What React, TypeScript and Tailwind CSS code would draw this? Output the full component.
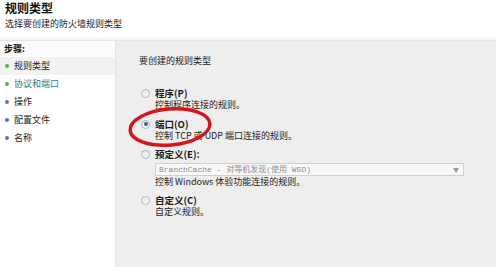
import React from "react";

const steps = [
  { label: "规则类型", done: true, active: true },
  { label: "协议和端口", done: true, link: true },
  { label: "操作" },
  { label: "配置文件" },
  { label: "名称" },
];

function Radio({ checked }: { checked?: boolean }) {
  return (
    <span className="w-[9px] h-[9px] shrink-0 rounded-full border border-[#b4b4b4] bg-gradient-to-br from-[#e6e6e6] to-[#fafafa] flex items-center justify-center">
      {checked && <span className="w-[4px] h-[4px] rounded-full bg-[#3f5f9a]" />}
    </span>
  );
}

function Option({
  label,
  desc,
  checked,
  children,
}: {
  label: string;
  desc: string;
  checked?: boolean;
  children?: React.ReactNode;
}) {
  return (
    <div className="flex flex-col">
      <div className="flex items-center h-[12px] ml-[2px] gap-[5px]">
        <Radio checked={checked} />
        <span className="text-[9.5px] font-bold text-[#1a1a1a] leading-[12px]">{label}</span>
      </div>
      {children}
      <div className="pl-[16px] text-[9px] leading-[12px] text-[#222]">{desc}</div>
    </div>
  );
}

export default function App() {
  return (
    <div
      className="relative w-[496px] h-[267px] bg-white overflow-hidden flex flex-col"
      style={{ fontFamily: '"Noto Sans CJK SC", "Noto Sans", sans-serif' }}
    >
      {/* Header */}
      <div className="h-[37px] shrink-0 pl-[5px] pt-[1px] bg-white">
        <div className="text-[12px] font-bold leading-[14px] text-[#111]">规则类型</div>
        <div className="mt-[3px] text-[9px] leading-[11px] text-[#222]">选择要创建的防火墙规则类型</div>
      </div>
      <div className="h-[3px] shrink-0 bg-[#f7f7f7]" />
      <div className="h-[1px] shrink-0 bg-[#e6e6e6]" />

      <div className="flex flex-1 min-h-0">
        {/* Steps */}
        <div className="w-[116px] shrink-0 bg-white border-r border-[#e2e2e2] flex flex-col">
          <div className="h-[15px] mx-[2px] bg-[#fbfbfb] flex items-center pl-[2px] text-[9px] font-bold text-[#111]">
            步骤:
          </div>
          <div className="mt-[1px] flex flex-col">
            {steps.map((s) => (
              <div
                key={s.label}
                className={`h-[18px] flex items-center gap-[5px] pl-[5px] ${s.active ? "bg-[#f2f2f2]" : ""}`}
              >
                <span
                  className={`w-[4px] h-[4px] rounded-full ${s.done ? "bg-[#5fae4a]" : "bg-[#6a6ab8]"}`}
                />
                <span className={`text-[9px] leading-[12px] ${s.link ? "text-[#2a7a8c]" : "text-[#222]"}`}>
                  {s.label}
                </span>
              </div>
            ))}
          </div>
        </div>

        {/* Content */}
        <div className="flex-1 bg-[#eeeeee] pt-[14px] pl-[23px] pr-[32px] flex flex-col">
          <div className="text-[9px] leading-[12px] text-[#222]">要创建的规则类型</div>
          <div className="mt-[20px] flex flex-col gap-[6px]">
            <div className="mb-[1px]">
              <Option label="程序(P)" desc="控制程序连接的规则。" />
            </div>
            <Option label="端口(O)" desc="控制 TCP 或 UDP 端口连接的规则。" checked />
            <Option label="预定义(E):" desc="控制 Windows 体验功能连接的规则。">
              <div className="ml-[16px] mt-[3px] h-[13px] border border-[#cfcfcf] bg-[#f8f8f8] flex items-center justify-between pl-[3px] pr-[4px]">
                <span
                  className="text-[8px] leading-[10px] text-[#8c8c8c]"
                  style={{ fontFamily: '"Liberation Mono", "Noto Sans CJK SC", monospace' }}
                >
                  BranchCache - 对等机发现(使用 WSD)
                </span>
                <span className="text-[6px] text-[#9a9a9a]">▼</span>
              </div>
            </Option>
            <Option label="自定义(C)" desc="自定义规则。" />
          </div>
        </div>
      </div>

      {/* Red annotation ring */}
      <svg className="absolute left-[124px] top-[103px]" width="94" height="48" viewBox="0 0 94 48">
        <ellipse
          cx="46"
          cy="24"
          rx="40"
          ry="18"
          fill="none"
          stroke="#d3161c"
          strokeWidth="3.5"
          transform="rotate(-5 46 24)"
        />
      </svg>
    </div>
  );
}
